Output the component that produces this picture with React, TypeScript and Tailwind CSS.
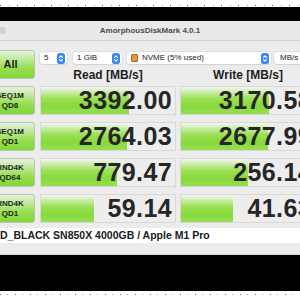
import React from 'react'

const rows = [
  { top: 'SEQ1M', bottom: 'QD8', read: '3392.00', readW: 88, write: '3170.58', writeW: 88 },
  { top: 'SEQ1M', bottom: 'QD1', read: '2764.03', readW: 86, write: '2677.99', writeW: 87 },
  { top: 'RND4K', bottom: 'QD64', read: '779.47', readW: 76, write: '256.14', writeW: 67 },
  { top: 'RND4K', bottom: 'QD1', read: '59.14', readW: 53, write: '41.63', writeW: 52 },
]

function Stepper() {
  return (
    <div className="w-[8px] h-[11px] rounded-[2.5px] bg-[#3d86f6] flex items-center justify-center">
      <svg width="6" height="9" viewBox="0 0 6 9" fill="none" stroke="white" strokeWidth="1.1" strokeLinecap="round" strokeLinejoin="round">
        <path d="M1.5 3.3 L3 1.8 L4.5 3.3" />
        <path d="M1.5 5.7 L3 7.2 L4.5 5.7" />
      </svg>
    </div>
  )
}

function Select({ width, children, stepper = true }: { width: string; children: React.ReactNode; stepper?: boolean }) {
  return (
    <div className={`${width} h-[12px] bg-white rounded-[3px] shadow-[0_0_0_0.5px_#cfcfcf,0_1px_1px_rgba(0,0,0,0.08)] flex items-center pl-[4px] pr-[2px] text-[8px] text-[#222]`}>
      <div className="flex-1 flex items-center gap-[4px] leading-none">{children}</div>
      {stepper && <Stepper />}
    </div>
  )
}

function Cell({ value, barW }: { value: string; barW: number }) {
  return (
    <div className="relative w-[136px] h-[29px] bg-[#ededed] border border-[#d8d8d8] flex items-center justify-end pr-[3px]">
      <div
        className="absolute left-0 top-0 bottom-0 bg-[linear-gradient(to_bottom,#f4f7f1_0%,#cdedb0_18%,#9de158_42%,#87d93b_70%,#95df52_100%)]"
        style={{ width: barW }}
      />
      <span className="relative text-[25px] font-bold text-[#262626] leading-none tracking-[0.4px]">{value}</span>
    </div>
  )
}

export default function App() {
  return (
    <div className="w-[300px] h-[300px] overflow-hidden bg-white font-['Liberation_Sans',Arial,sans-serif]">
      {/* top strip */}
      <div className="h-[7px] bg-white pt-[5px]">
        <div className="h-px bg-[repeating-linear-gradient(90deg,#555_0_1px,transparent_1px_9px,#999_9px_10px,transparent_10px_17px)]" />
      </div>
      <div className="h-[14px] bg-black" />

      {/* window */}
      <div className="bg-[#ececec]">
        <div className="relative h-[20px] border-b border-[#d4d4d4] bg-[#e9e9e9] flex items-center justify-center">
          <div className="absolute left-[-1px] top-[6px] w-[7px] h-[7px] rounded-full bg-[#d0d0d0]" />
          <span className="text-[8px] font-bold text-[#4b4b4b]">AmorphousDiskMark 4.0.1</span>
        </div>

        <div className="ml-[-15px] w-[340px] pt-[9px]">
          {/* top controls */}
          <div className="flex items-start">
            <div className="w-[50px] h-[29px] rounded-[3px] border border-[#b9c7b1] bg-[linear-gradient(to_bottom,#e7f2df_0%,#bfe99b_30%,#95dd4d_65%,#82d63a_100%)] flex items-center justify-center pl-[1px]">
              <span className="text-[11px] font-bold text-[#1f1f1f]">All</span>
            </div>
            <div className="ml-[5px] w-[285px] pt-[2px]">
              <div className="flex items-center">
                <Select width="w-[27px]">5</Select>
                <div className="w-[6px]" />
                <Select width="w-[49px]">1 GiB</Select>
                <div className="w-[5px]" />
                <Select width="w-[144px]">
                  <span className="w-[7px] h-[8px] rounded-[1px] bg-[#d99a3c] border border-[#a86f24]" />
                  <span>NVME (5% used)</span>
                </Select>
                <div className="w-[3px]" />
                <Select width="w-[46px]">
                  <span className="pl-[2px]">MB/s</span>
                </Select>
              </div>
              <div className="flex h-[22px] items-center">
                <div className="w-[136px] text-center text-[12px] font-bold text-[#1e1e1e]">Read [MB/s]</div>
                <div className="ml-[4px] w-[136px] text-center text-[12px] font-bold text-[#1e1e1e]">Write [MB/s]</div>
              </div>
            </div>
          </div>

          {/* result rows */}
          <div className="flex flex-col gap-[7px]">
            {rows.map((r) => (
              <div key={r.top + r.bottom} className="flex">
                <div className="w-[50px] h-[29px] rounded-[3px] border border-[#b9c7b1] bg-[linear-gradient(to_bottom,#e7f2df_0%,#bfe99b_30%,#95dd4d_65%,#82d63a_100%)] flex flex-col items-center justify-center text-[8px] font-bold text-[#1f1f1f] leading-[10px]">
                  <span>{r.top}</span>
                  <span>{r.bottom}</span>
                </div>
                <div className="ml-[5px]">
                  <Cell value={r.read} barW={r.readW} />
                </div>
                <div className="ml-[4px]">
                  <Cell value={r.write} barW={r.writeW} />
                </div>
              </div>
            ))}
          </div>
        </div>

        {/* device bar */}
        <div className="mt-[5px] h-[15px] bg-white flex items-center">
          <span className="text-[10.5px] font-bold text-[#202020] whitespace-nowrap">D_BLACK SN850X 4000GB / Apple M1 Pro</span>
        </div>
        <div className="h-[12px] border-b border-[#d6d6d6]" />
      </div>

      <div className="h-[36px] bg-black" />
      <div className="h-[9px] bg-white pt-[3px]">
        <div className="h-px bg-[repeating-linear-gradient(90deg,#666_0_1px,transparent_1px_7px,#aaa_7px_8px,transparent_8px_15px)]" />
      </div>
    </div>
  )
}
